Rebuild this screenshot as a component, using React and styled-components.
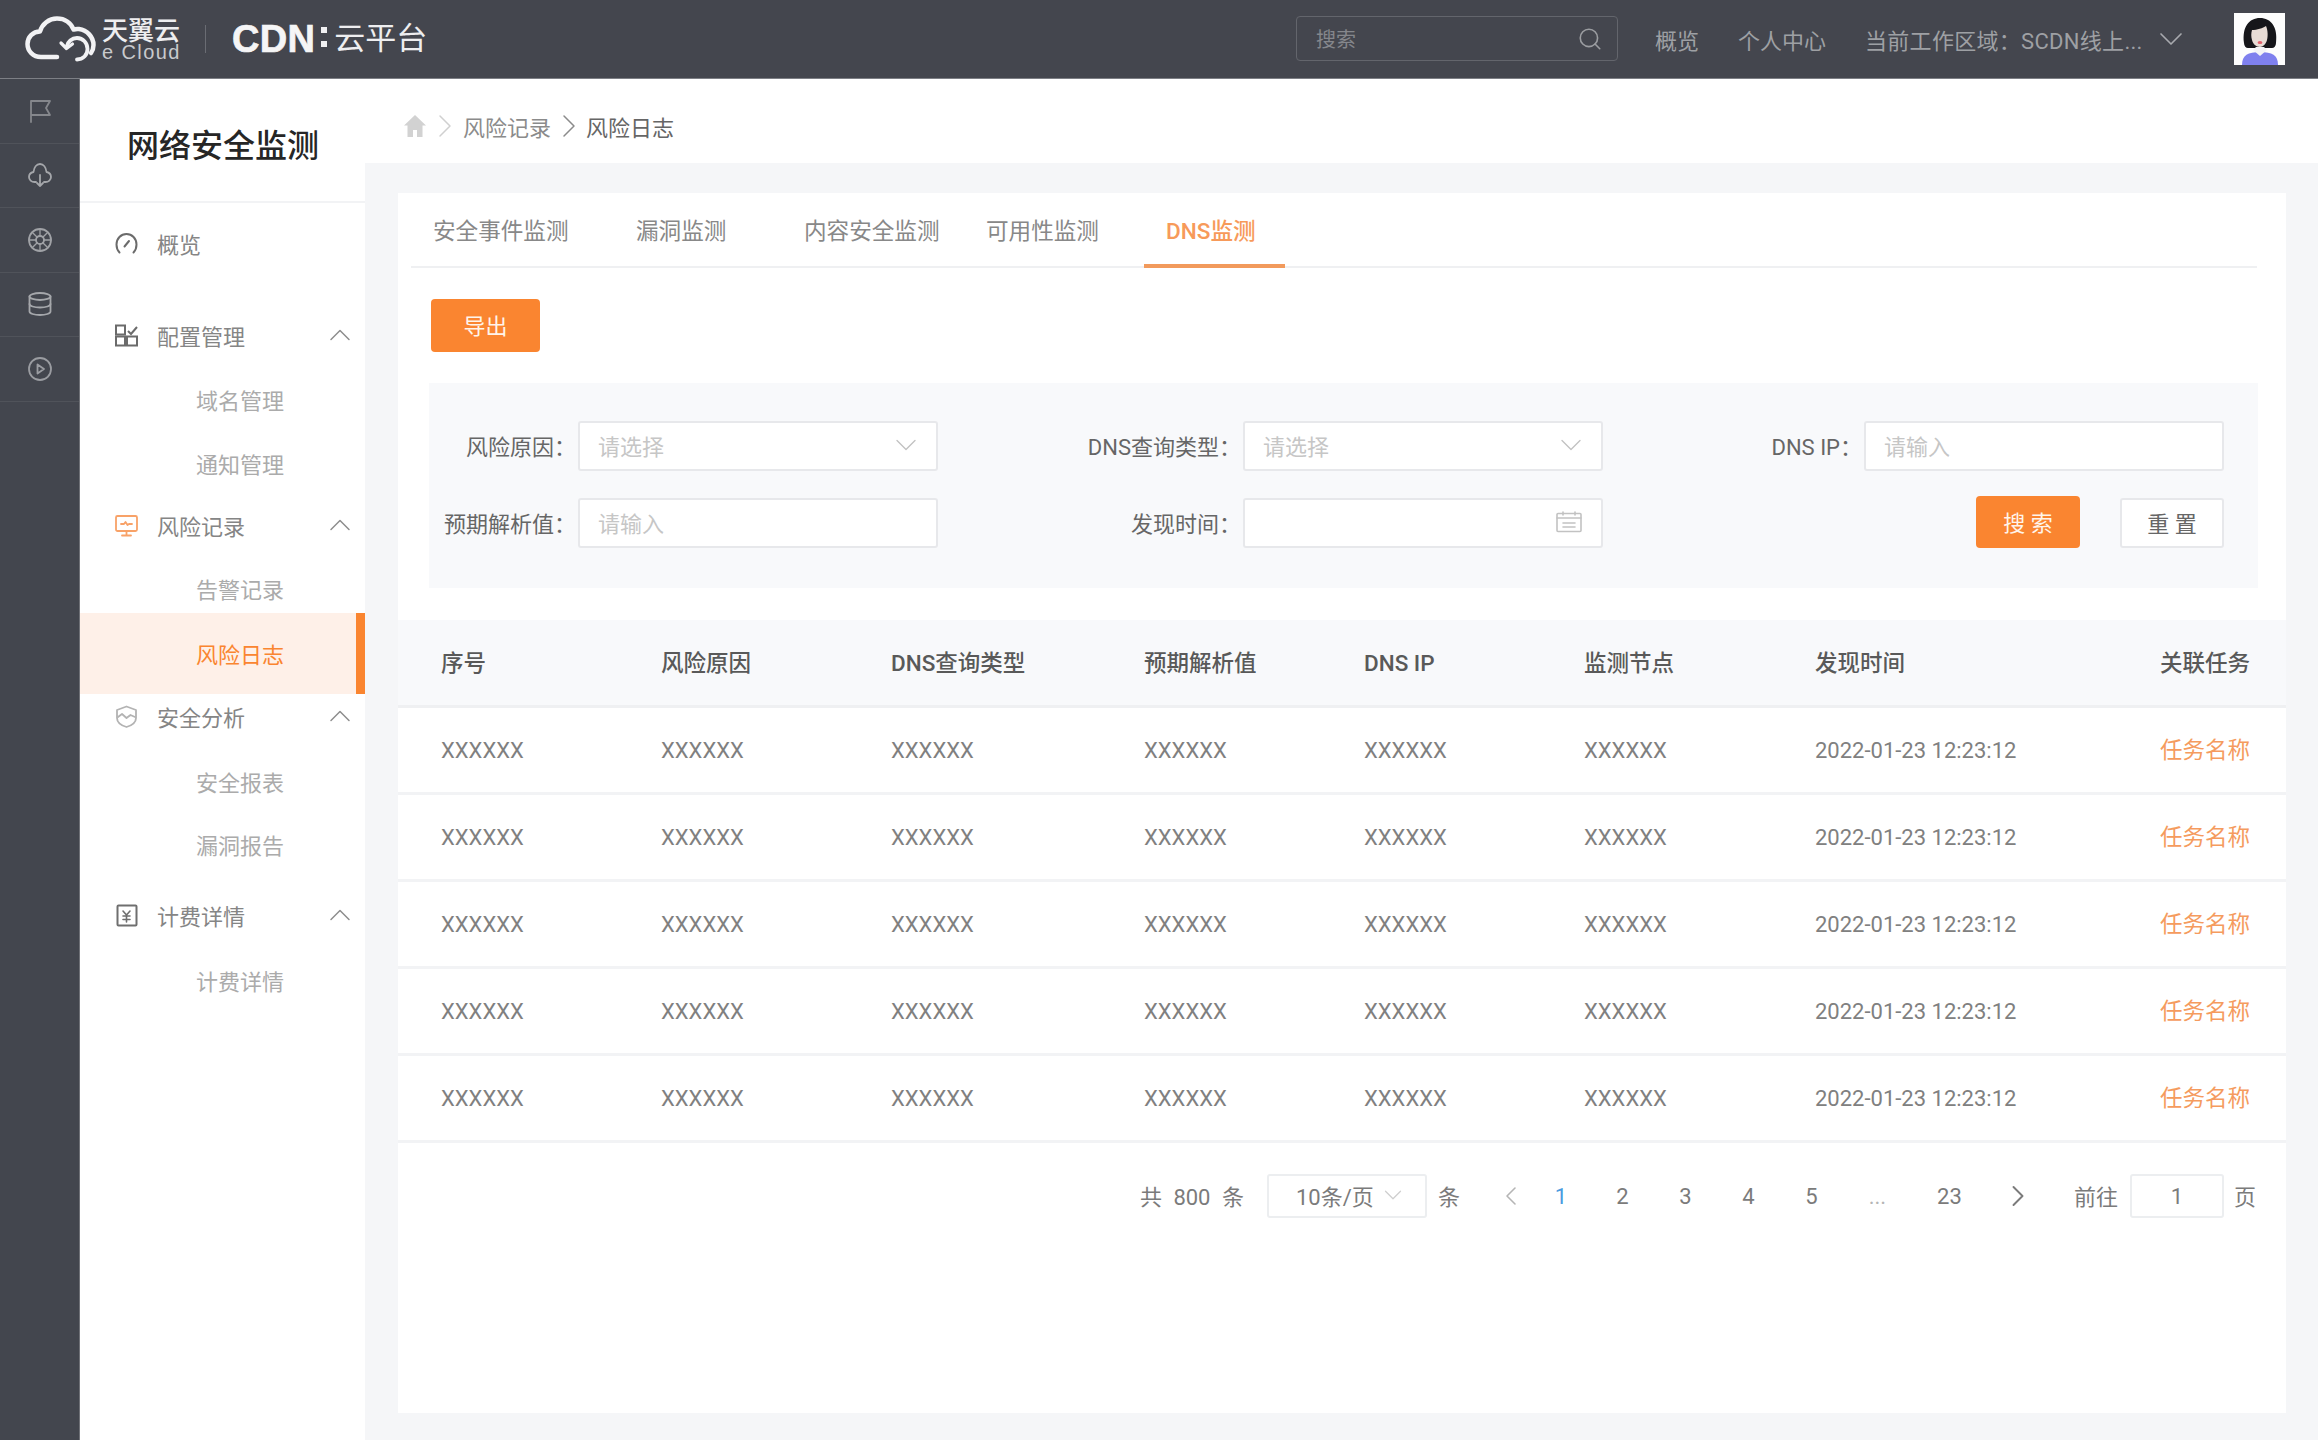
import React from "react";
import styled, { createGlobalStyle } from "styled-components";
import { Search, ChevronDown, ChevronUp, ChevronLeft, ChevronRight } from "lucide-react";

const Global = createGlobalStyle`
  html, body { margin: 0; padding: 0; background: #f5f6f8; }
  body { font-family: Roboto, "Noto Sans CJK SC", sans-serif; font-size: 22px; color: #777; }
  * { box-sizing: border-box; }
`;

const ORANGE = "#fa8530";

const Page = styled.div`
  width: 2318px;
  height: 1440px;
  display: flex;
  flex-direction: column;
  overflow: hidden;
`;
const TopBar = styled.header`
  height: 79px;
  flex: none;
  display: flex;
  align-items: center;
  padding: 0 33px 1px 25px;
  background: #44464e;
  border-bottom: 1px solid #7d7f85;
`;
const LogoWrap = styled.div`
  display: flex;
  align-items: center;
  color: #eeeef0;
`;
const LogoWords = styled.div`
  display: flex;
  flex-direction: column;
  margin-left: 6px;
  padding-top: 3px;
  width: 78px;
`;
const LogoCn = styled.span`
  font-size: 26px;
  line-height: 25px;
  font-weight: 500;
`;
const LogoEn = styled.span`
  font-family: "Liberation Sans", sans-serif;
  font-size: 20px;
  line-height: 17px;
  white-space: nowrap;
  color: #c9cacd;
  letter-spacing: 1.4px;
`;
const LogoDivider = styled.span`
  width: 1px;
  height: 28px;
  margin: 0 26px 0 25px;
  background: #6a6c73;
`;
const LogoCdn = styled.span`
  font-family: "Liberation Sans", sans-serif;
  font-weight: 700;
  font-size: 38px;
  line-height: 40px;
  letter-spacing: 0.3px;
  color: #f5f5f6;
  -webkit-text-stroke: 0.7px #f5f5f6;
`;
const LogoDots = styled.span`
  width: 6px;
  height: 20px;
  margin: 0 7px 4px 6px;
  background: linear-gradient(#f0f0f2 0 6px, transparent 6px 14px, #f0f0f2 14px 20px);
`;
const LogoProduct = styled.span`
  font-size: 31px;
  line-height: 40px;
  color: #eeeef0;
`;
const TopRight = styled.div`
  margin-left: auto;
  display: flex;
  align-items: center;
`;
const TopSearch = styled.div`
  width: 322px;
  height: 45px;
  display: flex;
  align-items: center;
  justify-content: space-between;
  padding: 0 14px 0 19px;
  border: 1px solid #63656c;
  border-radius: 4px;
  color: #85878c;
  font-size: 20px;
  svg { color: #9b9da1; }
`;
const NavLink = styled.span`
  margin-left: ${(p) => p.$ml}px;
  color: #9ea0a4;
  white-space: nowrap;
  width: ${(p) => p.$w}px;
  letter-spacing: ${(p) => (p.$w ? "0.3px" : "0")};
`;
const NavChevron = styled(ChevronDown)`
  margin-left: 3px;
  color: #a8aaae;
`;
const AvatarBox = styled.svg`
  margin-left: 43px;
  width: 51px;
  height: 52px;
  display: block;
`;
const Body = styled.div`
  flex: 1;
  display: flex;
  min-height: 0;
`;
const Rail = styled.nav`
  width: 80px;
  flex: none;
  background: #43464e;
  border-right: 1px solid #6f7177;
`;
const RailItem = styled.div`
  height: 64.5px;
  padding-left: 1px;
  display: flex;
  align-items: center;
  justify-content: center;
  border-bottom: 1px solid #50535a;
  color: ${(p) => p.$c};
`;
const Sidebar = styled.aside`
  width: 285px;
  flex: none;
  background: #fff;
`;
const SideTitle = styled.div`
  height: 124px;
  padding: 6px 0 0 47px;
  display: flex;
  align-items: center;
  font-size: 32px;
  font-weight: 500;
  color: #262626;
  border-bottom: 2px solid #f2f3f5;
`;
const MenuList = styled.div`
  display: flex;
  flex-direction: column;
`;
const MenuRow = styled.div`
  height: 48px;
  flex: none;
  margin-top: ${(p) => p.$mt}px;
  padding: 0 15px 0 35px;
  display: flex;
  align-items: center;
  color: #858585;
  svg.lead { width: 23px; height: 23px; flex: none; margin-right: 19px; }
  svg.caret { margin: 0 -8px 0 auto; color: #8d8d8d; }
`;
const SubRow = styled.div`
  height: ${(p) => (p.$active ? 81 : 48)}px;
  flex: none;
  margin-top: ${(p) => p.$mt}px;
  padding: 0 0 ${(p) => (p.$active ? 2 : 0)}px 116px;
  display: flex;
  align-items: center;
  color: ${(p) => (p.$active ? ORANGE : "#ababab")};
  background: ${(p) => (p.$active ? "#fef0e8" : "transparent")};
  border-right: ${(p) => (p.$active ? `9px solid ${ORANGE}` : "none")};
`;
const Main = styled.main`
  flex: 1;
  min-width: 0;
  display: flex;
  flex-direction: column;
`;
const Crumbs = styled.div`
  height: 84px;
  flex: none;
  background: #fff;
  display: flex;
  align-items: center;
  padding: 10px 0 0 39px;
  color: #8b8b8b;
`;
const CrumbSep = styled(ChevronRight)`
  margin: 0 ${(p) => p.$mr}px 0 ${(p) => p.$ml}px;
  color: ${(p) => p.$c};
`;
const CrumbNow = styled.span`
  color: #666;
`;
const Content = styled.div`
  flex: 1;
  min-height: 0;
  padding: 30px 32px 27px 33px;
`;
const Card = styled.section`
  height: 100%;
  background: #fff;
  display: flex;
  flex-direction: column;
`;
const Tabs = styled.div`
  height: 75px;
  flex: none;
  margin: 0 29px 0 13px;
  display: flex;
  border-bottom: 2px solid #eff0f2;
`;
const Tab = styled.div`
  width: ${(p) => p.$w}px;
  height: 75px;
  flex: none;
  padding: 2px 0 0 22px;
  display: flex;
  align-items: center;
  white-space: nowrap;
  font-size: 22.6px;
  color: ${(p) => (p.$active ? "#f79a5a" : "#888")};
  font-weight: ${(p) => (p.$active ? 500 : 400)};
  border-bottom: 4px solid ${(p) => (p.$active ? "#f29a5c" : "transparent")};
`;
const PrimaryBtn = styled.button`
  width: ${(p) => p.$w}px;
  height: ${(p) => p.$h}px;
  flex: none;
  border: 0;
  border-radius: 4px;
  background: ${ORANGE};
  color: #fff4ea;
  font: inherit;
  padding: 0 0 3px;
`;
const ExportRow = styled.div`
  padding: 31px 0 31px 33px;
  display: flex;
`;
const Filters = styled.div`
  margin: 0 28px 0 31px;
  padding: 38px 0 40px;
  background: #f8f9fb;
  display: grid;
  grid-template-columns: 149px 360px 305px 360px 261px 360px;
  grid-template-rows: 50px 50px;
  row-gap: 27px;
  align-items: center;
`;
const FieldLabel = styled.div`
  padding: 0 2px 3px 0;
  justify-self: stretch;
  text-align: right;
  color: #666;
  white-space: nowrap;
`;
const Box = styled.div`
  height: 50px;
  background: #fff;
  border: 2px solid #e7e8eb;
  border-radius: 3px;
  padding: 0 19px 3px 18px;
  display: flex;
  align-items: center;
  justify-content: space-between;
  color: #c6c6c6;
  svg { color: #c2c2c2; }
`;
const SelectArrow = styled(ChevronDown)`
  margin-right: -7px;
`;
const Actions = styled.div`
  display: flex;
  justify-content: flex-end;
  align-items: flex-end;
  gap: 40px;
  height: 52px;
  align-self: end;
`;
const GhostBtn = styled.button`
  width: 104px;
  height: 50px;
  background: #fff;
  border: 2px solid #e7e8eb;
  border-radius: 3px;
  color: #666;
  font: inherit;
  padding: 0 0 2px;
`;
const TableHead = styled.div`
  margin-top: 32px;
  height: 88px;
  flex: none;
  display: grid;
  grid-template-columns: 220px 230px 253px 220px 220px 231px 345px 126px;
  padding-left: 43px;
  align-items: baseline;
  align-content: center;
  background: #f8f9fb;
  border-bottom: 3px solid #eff0f2;
  color: #595959;
  font-weight: 500;
  font-size: 22.5px;
  line-height: 32px;
`;
const TableRow = styled.div`
  height: 87px;
  flex: none;
  display: grid;
  grid-template-columns: 220px 230px 253px 220px 220px 231px 345px 126px;
  padding-left: 43px;
  align-items: baseline;
  align-content: center;
  border-bottom: 3px solid #f2f3f5;
  color: #808080;
  white-space: nowrap;
  line-height: 32px;
`;
const TaskLink = styled.span`
  color: #f59b5e;
  font-size: 22.5px;
`;
const Pager = styled.div`
  padding: 31px 30px 0 0;
  display: flex;
  justify-content: flex-end;
  align-items: center;
  color: #7b7b7b;
`;
const Total = styled.span`
  word-spacing: 6px;
  margin-right: 23px;
  padding-bottom: 2px;
  white-space: nowrap;
`;
const PageSize = styled.div`
  width: 160px;
  height: 44px;
  padding: 0 17px 2px 27px;
  border: 2px solid #eceef0;
  border-radius: 3px;
  display: flex;
  align-items: center;
  justify-content: space-between;
  svg { color: #cfcfcf; }
`;
const Unit = styled.span`
  margin: 0 ${(p) => p.$mr || 0}px 0 ${(p) => p.$ml || 0}px;
  padding-bottom: 2px;
`;
const PageBtn = styled.span`
  width: ${(p) => p.$w || 63}px;
  flex: none;
  display: flex;
  justify-content: center;
  color: ${(p) => (p.$active ? "#4a9be0" : p.$muted ? "#b5b5b5" : "#7b7b7b")};
`;
const JumpBox = styled.div`
  width: 94px;
  height: 44px;
  margin-left: 12px;
  border: 2px solid #eceef0;
  border-radius: 3px;
  display: flex;
  align-items: center;
  justify-content: center;
`;

const CloudLogo = () => (
  <svg width="71" height="46" viewBox="0 0 71 46" fill="none" stroke="#f2f2f4" strokeWidth="4.5" strokeLinecap="round" strokeLinejoin="round">
    <path d="M32 41H16C8 41 2.500 35 2.500 28 2.500 21 8 15.500 15 15.500 17 8 24 2.500 32 2.500 40 2.500 46 7 48.500 13.500 50 13 52 12.800 54 13 62 14 68.500 21 68.500 29 68.500 32 67.800 34.500 66 37" />
    <path d="M41.500 31C42.500 25.500 47 22 52 22 58 22 62.500 27 62.500 33 62.500 39 58 43.500 52 43.500" strokeWidth="3.800" />
    <path d="M36 27l5.500 5.500 6-4.500" strokeWidth="3.200" />
  </svg>
);
const Avatar = () => (
  <AvatarBox viewBox="0 0 51 52">
    <rect width="51" height="52" fill="#fdfdfd" />
    <path d="M8 52C8 42 14 39 26 39 38 39 44 42 44 52z" fill="#7f80ee" />
    <path d="M10 30C8 14 15 5 26 5 37 5 44 14 42 30 42 33 40 35 38 35L14 35C12 35 10 33 10 30z" fill="#16161a" />
    <path d="M18 17C23 17 29 15 32 13 34 17 34 24 33 27 32 31 29 34 26 34 22 34 19 31 18 27 17 24 17 20 18 17z" fill="#e8dcd5" />
    <path d="M19 37L26 43 33 37 30 34 22 34z" fill="#f4f4f6" />
    <ellipse cx="26" cy="29.500" rx="2.400" ry="1.500" fill="#e2606c" />
  </AvatarBox>
);
const svgProps = { fill: "none", stroke: "currentColor", strokeLinecap: "round", strokeLinejoin: "round" };
const RailFlag = () => (
  <svg width="24" height="24" viewBox="0 0 24 24" {...svgProps} strokeWidth="1.800">
    <path d="M3 23V2h19l-4 7 4 7H3" />
  </svg>
);
const RailCloud = () => (
  <svg width="26" height="26" viewBox="0 0 26 26" {...svgProps} strokeWidth="1.800">
    <path d="M9 20H7.500C4.500 20 2 17.800 2 15c0-2.500 2-4.500 4.500-5C7 5.500 9.500 2 13 2s6 3.500 6.500 8c2.500.5 4.500 2.500 4.500 5 0 2.800-2.500 5-5.500 5H17" />
    <path d="M13 13v11M10 21l3 3 3-3" />
  </svg>
);
const RailWheel = () => (
  <svg width="26" height="26" viewBox="0 0 26 26" {...svgProps} strokeWidth="1.800">
    <circle cx="13" cy="13" r="11" />
    <circle cx="13" cy="13" r="4" />
    <path d="M13 2v7M13 17v7M2 13h7M17 13h7M5.200 5.200l5 5M15.800 15.800l5 5M20.800 5.200l-5 5M10.200 15.800l-5 5" strokeWidth="1.300" />
  </svg>
);
const RailDb = () => (
  <svg width="26" height="26" viewBox="0 0 26 26" {...svgProps} strokeWidth="1.800">
    <ellipse cx="13" cy="5.500" rx="10.500" ry="3.500" />
    <path d="M2.500 5.500v15c0 2 4.700 3.500 10.500 3.500s10.500-1.500 10.500-3.500v-15" />
    <path d="M2.500 13c0 2 4.700 3.500 10.500 3.500S23.500 15 23.500 13" />
  </svg>
);
const RailPlay = () => (
  <svg width="26" height="26" viewBox="0 0 26 26" {...svgProps} strokeWidth="1.800">
    <circle cx="13" cy="13" r="11" />
    <path d="M10.500 8.500l6.500 4.500-6.500 4.500z" />
  </svg>
);
const GaugeIcon = () => (
  <svg className="lead" viewBox="0 0 23 23" {...svgProps} strokeWidth="2" color="#6b6b6b">
    <path d="M4.500 20.500C2.500 18.500 1.500 15.500 1.500 12.500 1.500 6.500 6 2 11.500 2s10 4.500 10 10.500c0 3-1 6-3 8" />
    <path d="M9.500 14.500l4.500-5.500" />
  </svg>
);
const ConfigIcon = () => (
  <svg className="lead" viewBox="0 0 23 23" {...svgProps} strokeWidth="2" color="#6b6b6b" strokeLinecap="butt" strokeLinejoin="miter">
    <rect x="1" y="1.500" width="9" height="9" />
    <rect x="1" y="12.500" width="9" height="9" />
    <rect x="12" y="12.500" width="10" height="9" />
    <path d="M13 7l3 3 6-7" />
  </svg>
);
const MonitorIcon = () => (
  <svg className="lead" viewBox="0 0 23 23" {...svgProps} strokeWidth="1.800" color="#f8a268">
    <rect x="1" y="2" width="21" height="15" rx="1.500" />
    <path d="M11.500 17v4M7 21.500h9M6 10h3l1.500-2 2 3 1.500-1h3" />
  </svg>
);
const ShieldIcon = () => (
  <svg className="lead" viewBox="0 0 23 23" {...svgProps} strokeWidth="1.800" color="#b3b3b3">
    <path d="M11.500 1.500L21 5v8c0 4.500-4.500 7.500-9.500 9C6.500 20.500 2 17.500 2 13V5z" />
    <path d="M3 12l4-3 4.500 4 4-3 4.500 2" />
  </svg>
);
const BillIcon = () => (
  <svg className="lead" viewBox="0 0 23 23" {...svgProps} strokeWidth="2" color="#6f6f6f">
    <rect x="2.500" y="1.500" width="19" height="20" rx="1" />
    <path d="M8 7l3.500 4L15 7M8 12h7M8 15.500h7M11.500 11v7" strokeWidth="1.600" />
  </svg>
);
const HomeIcon = () => (
  <svg width="22" height="22" viewBox="0 0 22 22" fill="#d2d2d2">
    <path d="M11 0L0 10.500h3.500V22h5.500v-7h4v7h5.500V10.500H22z" />
  </svg>
);
const CalendarIcon = () => (
  <svg width="26" height="22" viewBox="0 0 26 22" {...svgProps} strokeWidth="1.600">
    <rect x="1" y="2.500" width="24" height="18" rx="1" />
    <path d="M1 7h24M7 1v3M19 1v3M7 12h12M7 16h12" />
  </svg>
);

const Caret = () => <ChevronUp className="caret" size={36} strokeWidth={1} />;

const tabs = [
  ["安全事件监测", 203],
  ["漏洞监测", 168],
  ["内容安全监测", 182],
  ["可用性监测", 180],
  ["DNS监测", 141, true],
];
const columns = ["序号", "风险原因", "DNS查询类型", "预期解析值", "DNS IP", "监测节点", "发现时间", "关联任务"];
const rows = [0, 1, 2, 3, 4];
const pages = [["1", 60, true], ["2"], ["3"], ["4"], ["5"]];

export default function App() {
  return (
    <Page>
      <Global />
      <TopBar>
        <LogoWrap>
          <CloudLogo />
          <LogoWords>
            <LogoCn>天翼云</LogoCn>
            <LogoEn>e Cloud</LogoEn>
          </LogoWords>
          <LogoDivider />
          <LogoCdn>CDN</LogoCdn>
          <LogoDots />
          <LogoProduct>云平台</LogoProduct>
        </LogoWrap>
        <TopRight>
          <TopSearch>
            搜索
            <Search size={26} strokeWidth={1.5} />
          </TopSearch>
          <NavLink $ml={37}>概览</NavLink>
          <NavLink $ml={39}>个人中心</NavLink>
          <NavLink $ml={39} $w={283}>当前工作区域：SCDN线上...</NavLink>
          <NavChevron size={40} strokeWidth={1} />
          <Avatar />
        </TopRight>
      </TopBar>
      <Body>
        <Rail>
          <RailItem $c="#85878c"><RailFlag /></RailItem>
          <RailItem $c="#a5a7ab"><RailCloud /></RailItem>
          <RailItem $c="#a0a2a6"><RailWheel /></RailItem>
          <RailItem $c="#a5a7ab"><RailDb /></RailItem>
          <RailItem $c="#9a9ca1"><RailPlay /></RailItem>
        </Rail>
        <Sidebar>
          <SideTitle>网络安全监测</SideTitle>
          <MenuList>
            <MenuRow $mt={16}><GaugeIcon />概览</MenuRow>
            <MenuRow $mt={44}><ConfigIcon />配置管理<Caret /></MenuRow>
            <SubRow $mt={16}>域名管理</SubRow>
            <SubRow $mt={16}>通知管理</SubRow>
            <MenuRow $mt={14}><MonitorIcon />风险记录<Caret /></MenuRow>
            <SubRow $mt={15}>告警记录</SubRow>
            <SubRow $mt={1} $active>风险日志</SubRow>
            <MenuRow $mt={-2}><ShieldIcon />安全分析<Caret /></MenuRow>
            <SubRow $mt={17}>安全报表</SubRow>
            <SubRow $mt={15}>漏洞报告</SubRow>
            <MenuRow $mt={23}><BillIcon />计费详情<Caret /></MenuRow>
            <SubRow $mt={17}>计费详情</SubRow>
          </MenuList>
        </Sidebar>
        <Main>
          <Crumbs>
            <HomeIcon />
            <CrumbSep size={40} strokeWidth={0.9} $c="#d0d0d0" $ml={-1} $mr={-2} />
            风险记录
            <CrumbSep size={40} strokeWidth={0.9} $c="#8b8b8b" $ml={-2} $mr={-3} />
            <CrumbNow>风险日志</CrumbNow>
          </Crumbs>
          <Content>
            <Card>
              <Tabs>
                {tabs.map(([label, w, active]) => (
                  <Tab key={label} $w={w} $active={active}>{label}</Tab>
                ))}
              </Tabs>
              <ExportRow>
                <PrimaryBtn $w={109} $h={53}>导出</PrimaryBtn>
              </ExportRow>
              <Filters>
                <FieldLabel>风险原因：</FieldLabel>
                <Box>请选择<SelectArrow size={36} strokeWidth={0.9} /></Box>
                <FieldLabel>DNS查询类型：</FieldLabel>
                <Box>请选择<SelectArrow size={36} strokeWidth={0.9} /></Box>
                <FieldLabel>DNS IP：</FieldLabel>
                <Box>请输入</Box>
                <FieldLabel>预期解析值：</FieldLabel>
                <Box>请输入</Box>
                <FieldLabel>发现时间：</FieldLabel>
                <Box><span />
                  <CalendarIcon />
                </Box>
                <span />
                <Actions>
                  <PrimaryBtn $w={104} $h={52}>搜 索</PrimaryBtn>
                  <GhostBtn>重 置</GhostBtn>
                </Actions>
              </Filters>
              <TableHead>
                {columns.map((c) => <span key={c}>{c}</span>)}
              </TableHead>
              {rows.map((r) => (
                <TableRow key={r}>
                  <span>XXXXXX</span>
                  <span>XXXXXX</span>
                  <span>XXXXXX</span>
                  <span>XXXXXX</span>
                  <span>XXXXXX</span>
                  <span>XXXXXX</span>
                  <span>2022-01-23 12:23:12</span>
                  <TaskLink>任务名称</TaskLink>
                </TableRow>
              ))}
              <Pager>
                <Total>共 800 条</Total>
                <PageSize>10条/页<ChevronDown size={30} strokeWidth={1} /></PageSize>
                <Unit $ml={11} $mr={32}>条</Unit>
                <PageBtn $w={39} $muted><ChevronLeft size={32} strokeWidth={1.2} /></PageBtn>
                {pages.map(([n, w, active]) => (
                  <PageBtn key={n} $w={w} $active={active}>{n}</PageBtn>
                ))}
                <PageBtn $w={69} $muted>...</PageBtn>
                <PageBtn $w={75}>23</PageBtn>
                <PageBtn $w={62}><ChevronRight size={36} strokeWidth={1.3} /></PageBtn>
                <Unit $ml={25}>前往</Unit>
                <JumpBox>1</JumpBox>
                <Unit $ml={10}>页</Unit>
              </Pager>
            </Card>
          </Content>
        </Main>
      </Body>
    </Page>
  );
}
